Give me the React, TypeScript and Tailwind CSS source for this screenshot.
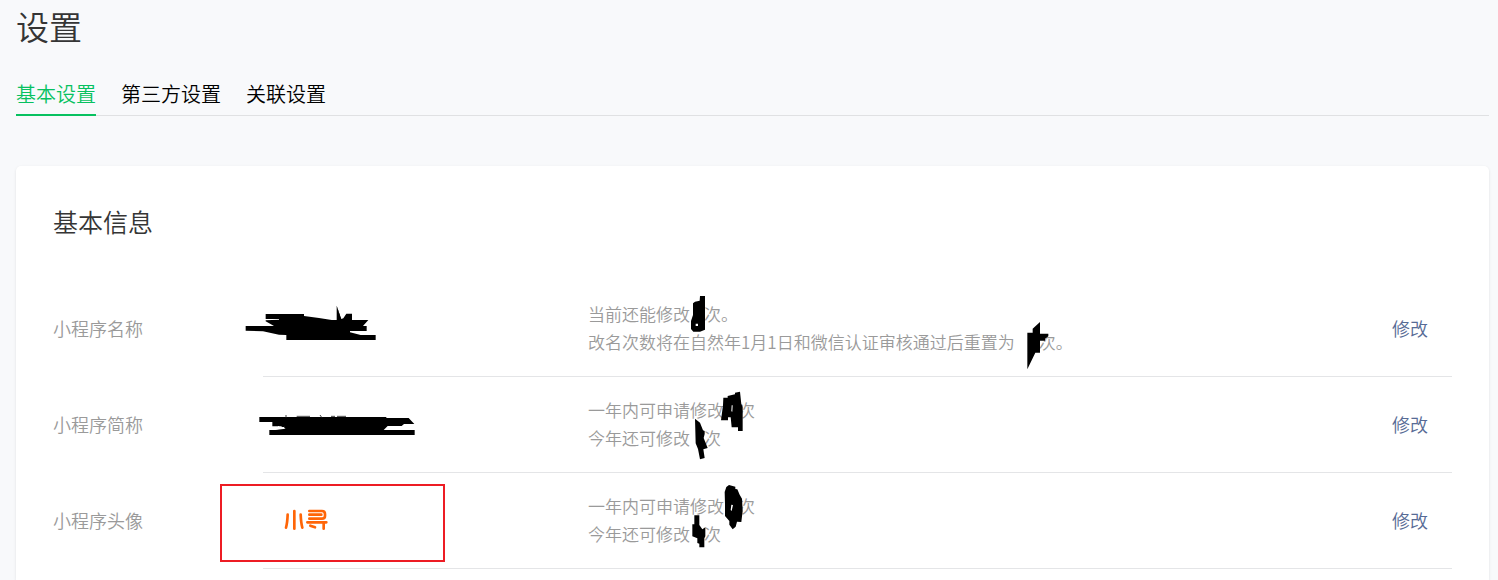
import type { ReactNode } from "react";

const tabs = [
  { name: "基本设置", href: "#basic", active: true },
  { name: "第三方设置", href: "#third-party", active: false },
  { name: "关联设置", href: "#relation", active: false },
];

// Blacked-out digit inside a sentence, the strokes run past the line box
function Blot({ children, wide }: { children: ReactNode; wide?: boolean }) {
  return (
    <span
      className={`relative inline-block h-4 align-middle ${wide ? "w-6" : "w-[14px]"}`}>
      <svg
        className="absolute right-[-11px] top-[-18px]"
        width="40"
        height="60"
        viewBox="0 0 120 180"
        aria-hidden="true">
        {children}
      </svg>
    </span>
  );
}

function NameMark() {
  return (
    <svg width="150" height="58" viewBox="0 0 450 174" aria-hidden="true">
      <path d="M20 81H105L80 67V64L120 62V60H80V45H195V51L240 57L278 63H304L293 20L307 60L313 58L322 44H339V63H388L372 81H383V96H333V100L365 108H410V123H142V108L120 107L72 97L20 95Z" />
      <path d="M293 20V63H307Z" />
    </svg>
  );
}

function ShortNameMark() {
  return (
    <svg width="180" height="40" viewBox="0 0 540 120" aria-hidden="true">
      <path d="M25 39H406V42H473L490 60H459L452 66H410L398 78H491V93H55V78H72L104 74L90 67H64V54H25Z" />
      <path
        d="M105 33V40M137 37H177M207 33L212 40M240 37H252M258 37H285"
        fill="none"
        stroke="#444"
        strokeWidth="3"
      />
      <path d="M80 72L84 66M72 76L100 70" stroke="#fff" strokeWidth="3" />
    </svg>
  );
}

function Logo() {
  return (
    <svg
      width="44"
      height="22"
      viewBox="0 0 132 66"
      fill="none"
      stroke="#ff6507"
      strokeWidth="8"
      strokeLinecap="round"
      strokeLinejoin="round"
      role="img"
      aria-label="小程序头像">
      <path d="M31 6V59M11 17Q10 42 6 56M50 17Q51 42 55 56" />
      <path d="M76 6H114Q123 6 123 15V21Q123 29 114 29H76M76 17H112M70 40H127M119 42V59M79 50L93 55" />
    </svg>
  );
}

type Row = {
  label: string;
  value: ReactNode;
  hints: ReactNode[];
};

const rows: Row[] = [
  {
    label: "小程序名称",
    value: (
      <div className="-ml-6">
        <NameMark />
      </div>
    ),
    hints: [
      <>
        当前还能修改
        <Blot>
          <path
            d="M75 18H90V119L75 125H55L48 117V93L54 75V40L60 35L74 32ZM62 101V108H69V101Z"
            fillRule="evenodd"
          />
        </Blot>
        次。
      </>,
      <>
        改名次数将在自然年1月1日和微信认证审核通过后重置为
        <Blot wide>
          <path d="M52 44H68V32L90 12V47H115V55L105 62V68H90V104H76L52 154Z" />
        </Blot>
        次。
      </>,
    ],
  },
  {
    label: "小程序简称",
    value: (
      <div className="-ml-3">
        <ShortNameMark />
      </div>
    ),
    hints: [
      <>
        一年内可申请修改
        <Blot>
          <path
            d="M43 35H56V30L78 25V20L93 17L97 55L101 62V135H87V124H68L65 94H57V103H36L42 58ZM68 58L67 76L70 77L71 58Z"
            fillRule="evenodd"
          />
        </Blot>
        次
      </>,
      <>
        今年还可修改
        <Blot>
          <path d="M60 14L75 26L84 49L89 51V60L86 72L98 102L85 106L89 132L75 136L69 105L62 88Z" />
        </Blot>
        次
      </>,
    ],
  },
  {
    label: "小程序头像",
    value: (
      <div className="relative ml-[21px]">
        {/* highlight frame around the avatar */}
        <div className="pointer-events-none absolute left-[-64px] top-[-25px] h-[78px] w-[225px] border-2 border-[#ed1c24]" />
        <Logo />
      </div>
    ),
    hints: [
      <>
        一年内可申请修改
        <Blot>
          <path
            d="M52 15L60 9L79 14V21L85 22L92 38L99 50L101 87L97 120L84 119L80 134L71 142L61 128V117L48 102V66L47 30ZM67 68L65 84L68 87L72 69Z"
            fillRule="evenodd"
          />
        </Blot>
        次
      </>,
      <>
        今年还可修改
        <Blot>
          <path d="M58 16H73V45L82 58L91 52V79L88 85V112H73V101L67 99V85L52 79V43H58Z" />
        </Blot>
        次
      </>,
    ],
  },
];

export default function App() {
  return (
    <div className="flex min-h-screen flex-col bg-[#f8f9fb] pl-4 pr-[9px] font-['Noto_Sans_CJK_SC',sans-serif] font-[350] text-[#353535]">
      <h1 className="text-[33px] leading-[52px]">设置</h1>

      <nav className="mt-7 flex gap-[25px] border-b border-[#e0e1e3]">
        {tabs.map((tab) => (
          <a
            key={tab.href}
            href={tab.href}
            className={`-mb-px border-b-2 pb-1.5 text-xl leading-7 ${
              tab.active
                ? "border-[#07c160] text-[#07c160]"
                : "border-transparent text-black"
            }`}>
            {tab.name}
          </a>
        ))}
      </nav>

      <main className="mt-[50px] flex-1 rounded-t-[5px] bg-white px-[37px] pt-9 shadow-[0_1px_3px_rgba(0,0,0,0.1)]">
        <h2 className="text-[25px] leading-[38px]">基本信息</h2>

        <div className="mt-[41px]">
          {rows.map((row) => (
            <div key={row.label} className="flex">
              <div className="flex w-[210px] shrink-0 items-center pb-0.5 text-lg text-[#9a9a9a]">
                {row.label}
              </div>
              <div className="flex min-h-24 flex-1 items-center border-b border-[#e4e5e7] pb-0.5 pr-6">
                <div className="w-[325px] shrink-0">{row.value}</div>
                <div className="flex-1 text-[17px] leading-7 text-[#9a9a9a]">
                  {row.hints.map((hint, i) => (
                    <p key={i}>{hint}</p>
                  ))}
                </div>
                <a
                  href="#edit"
                  className="shrink-0 text-lg text-[#576b95]">
                  修改
                </a>
              </div>
            </div>
          ))}
        </div>
      </main>
    </div>
  );
}
